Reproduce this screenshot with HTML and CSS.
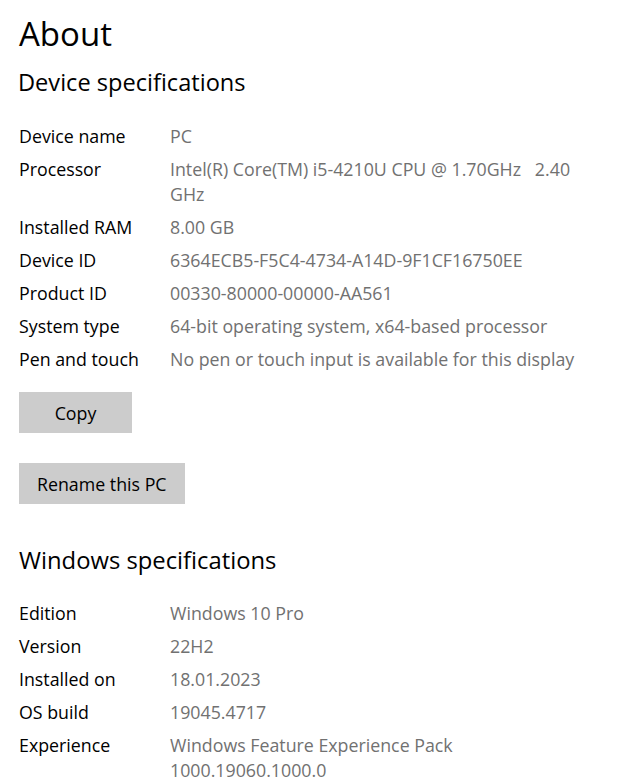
FILE: index.html
```html
<!DOCTYPE html>
<html lang="en">
<head>
<meta charset="utf-8">
<title>About</title>
<link rel="stylesheet" href="styles.css">
</head>
<body>
<main class="page">
  <h1 class="title">About</h1>
  <section class="section">
    <h2 class="section-title">Device specifications</h2>
    <dl class="specs">
      <div class="row"><dt>Device name</dt><dd>PC</dd></div>
      <div class="row"><dt>Processor</dt><dd>Intel(R) Core(TM) i5-4210U CPU @ 1.70GHz&nbsp;&nbsp; 2.40 GHz</dd></div>
      <div class="row"><dt>Installed RAM</dt><dd>8.00 GB</dd></div>
      <div class="row"><dt>Device ID</dt><dd>6364ECB5-F5C4-4734-A14D-9F1CF16750EE</dd></div>
      <div class="row"><dt>Product ID</dt><dd>00330-80000-00000-AA561</dd></div>
      <div class="row"><dt>System type</dt><dd>64-bit operating system, x64-based processor</dd></div>
      <div class="row"><dt>Pen and touch</dt><dd>No pen or touch input is available for this display</dd></div>
    </dl>
    <div class="actions">
      <button class="btn btn-copy" type="button">Copy</button>
      <button class="btn" type="button">Rename this PC</button>
    </div>
  </section>
  <section class="section">
    <h2 class="section-title section-title-win">Windows specifications</h2>
    <dl class="specs">
      <div class="row"><dt>Edition</dt><dd>Windows 10 Pro</dd></div>
      <div class="row"><dt>Version</dt><dd>22H2</dd></div>
      <div class="row"><dt>Installed on</dt><dd>18.01.2023</dd></div>
      <div class="row"><dt>OS build</dt><dd>19045.4717</dd></div>
      <div class="row"><dt>Experience</dt><dd>Windows Feature Experience Pack 1000.19060.1000.0</dd></div>
    </dl>
  </section>
</main>
</body>
</html>
```

FILE: styles.css
```css
html, body {
  margin: 0;
  padding: 0;
  background: #ffffff;
}

body {
  font-family: "Open Sans", "Noto Sans", "Liberation Sans", sans-serif;
  color: #000000;
}

.page {
  padding: 12px 0 0 19px;
}

.title {
  margin: 0;
  font-size: 33px;
  line-height: 44px;
  font-weight: 400;
}

.section-title {
  margin: 10px 0 22px -1px;
  font-size: 23.6px;
  line-height: 32px;
  font-weight: 400;
}

.section-title-win {
  margin: 40px 0 21px 0;
  font-size: 23.8px;
}

.specs {
  margin: 0;
  font-size: 17.8px;
  line-height: 25px;
}

.row {
  display: flex;
  padding: 4px 0;
}

.row dt {
  flex: 0 0 151px;
  color: #000000;
}

.row dd {
  margin: 0;
  width: 420px;
  color: #717171;
}

.actions {
  display: flex;
  flex-direction: column;
  align-items: flex-start;
  gap: 30px;
  margin-top: 16px;
}

.btn {
  height: 41px;
  padding: 0 18px;
  border: 0;
  background: #cccccc;
  color: #000000;
  font-family: inherit;
  font-size: 17.8px;
}

.btn-copy {
  min-width: 113px;
}
```
